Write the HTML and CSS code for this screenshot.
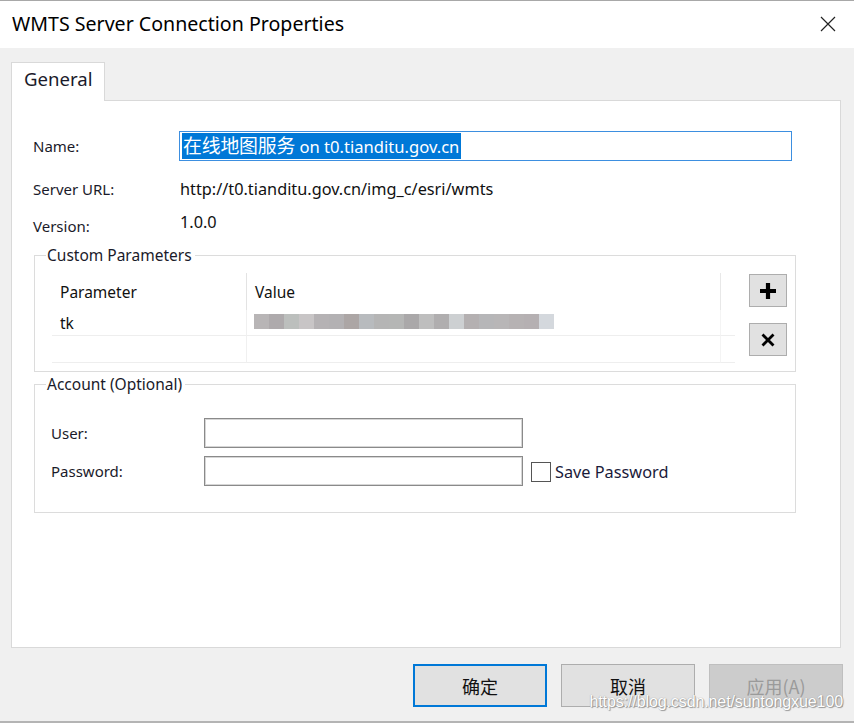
FILE: index.html
```html
<!DOCTYPE html>
<html lang="zh-CN">
<head>
<meta charset="utf-8">
<title>WMTS Server Connection Properties</title>
<link rel="stylesheet" href="styles.css">
</head>
<body>
<div class="window">
  <div class="titlebar">
    <span class="title">WMTS Server Connection Properties</span>
    <svg class="close" width="16" height="16" viewBox="0 0 16 16"><path d="M1 1 L15 15 M15 1 L1 15" stroke="#222" stroke-width="1.2" fill="none"/></svg>
  </div>
  <div class="client">
    <div class="tabs"><div class="tab">General</div></div>
    <div class="panel">
      <div class="row row-name">
        <span class="label">Name:</span>
        <div class="name-input"><span class="sel"><span class="cjk">在线地图服务</span> on t0.tianditu.gov.cn</span></div>
      </div>
      <div class="row row-url">
        <span class="label">Server URL:</span>
        <span class="value">http://t0.tianditu.gov.cn/img_c/esri/wmts</span>
      </div>
      <div class="row row-ver">
        <span class="label label-ver">Version:</span>
        <span class="value">1.0.0</span>
      </div>
      <fieldset class="group group-params">
        <legend>Custom Parameters</legend>
        <div class="params">
          <div class="grid">
            <div class="cell head c1">Parameter</div>
            <div class="cell head c2">Value</div>
            <div class="cell head c3"></div>
            <div class="cell r1 c1">tk</div>
            <div class="cell r1 c2 blur">
              <i style="background:#b8b5b6"></i><i style="background:#aeaaac"></i><i style="background:#bcbfbd"></i><i style="background:#c8c5c6"></i><i style="background:#b5b2b4"></i><i style="background:#b3b1b3"></i><i style="background:#aca6a5"></i><i style="background:#b8bbbe"></i><i style="background:#b5b5b5"></i><i style="background:#b5b6b5"></i><i style="background:#aaa8a9"></i><i style="background:#bebebe"></i><i style="background:#b0aeaf"></i><i style="background:#cdd0d2"></i><i style="background:#b4b0b1"></i><i style="background:#b6b6b8"></i><i style="background:#b8b6b7"></i><i style="background:#b6b2b3"></i><i style="background:#b5b0b2"></i><i style="background:#d4d8dd"></i>
            </div>
            <div class="cell r1 c3"></div>
            <div class="cell r2 c1"></div>
            <div class="cell r2 c2"></div>
            <div class="cell r2 c3"></div>
          </div>
          <div class="side-buttons">
            <div class="sbtn"><svg width="20" height="20" viewBox="0 0 20 20"><path d="M10 2 V18 M2 10 H18" stroke="#000" stroke-width="4.2" fill="none"/></svg></div>
            <div class="sbtn"><svg width="16" height="16" viewBox="0 0 16 16"><path d="M2.5 2.5 L13.5 13.5 M13.5 2.5 L2.5 13.5" stroke="#000" stroke-width="2.8" fill="none"/></svg></div>
          </div>
        </div>
      </fieldset>
      <fieldset class="group group-account">
        <legend>Account (Optional)</legend>
        <div class="acc-row">
          <span class="acc-label">User:</span>
          <div class="textbox"></div>
        </div>
        <div class="acc-row">
          <span class="acc-label">Password:</span>
          <div class="textbox"></div>
          <span class="checkbox"></span>
          <span class="chk-label">Save Password</span>
        </div>
      </fieldset>
    </div>
    <div class="footer">
      <div class="btn btn-default">确定</div>
      <div class="btn">取消</div>
      <div class="btn btn-disabled">应用(A)</div>
    </div>
  </div>
  <div class="watermark">https://blog.csdn.net/suntongxue100</div>
</div>
</body>
</html>
```

FILE: styles.css
```css
html, body {
  margin: 0;
  padding: 0;
}
body {
  width: 854px;
  height: 723px;
  overflow: hidden;
  background: #f0f0f0;
  font-family: "Noto Sans", "Noto Sans CJK SC", sans-serif;
  color: #111;
}
.window {
  position: relative;
  width: 854px;
  height: 723px;
  box-sizing: border-box;
  border-bottom: 2px solid #b4b4b4;
}
.titlebar {
  height: 48px;
  box-sizing: border-box;
  border-top: 1px solid #a8a8a8;
  background: #fff;
  display: flex;
  align-items: center;
  justify-content: space-between;
  padding: 0 18px 0 12px;
}
.title {
  font-size: 19.6px;
  color: #000;
  margin-top: -2px;
  letter-spacing: 0;
}
.close {
  margin-top: -1px;
}
.client {
  padding: 14px 13px 0 11px;
}
.tabs {
  display: flex;
  height: 38px;
}
.tab {
  position: relative;
  z-index: 1;
  width: 94px;
  height: 39px;
  box-sizing: border-box;
  background: #fff;
  border: 1px solid #d9d9d9;
  border-bottom: none;
  font-size: 18.6px;
  padding: 3px 0 0 12px;
  color: #1a1a2a;
}
.panel {
  height: 548px;
  box-sizing: border-box;
  background: #fff;
  border: 1px solid #d9d9d9;
  padding: 30px 44px 0 21px;
  display: flex;
  flex-direction: column;
}
.row {
  display: flex;
  align-items: center;
  height: 28px;
  font-size: 15px;
}
.row-name {
  height: 30px;
}
.row-url {
  margin-top: 14px;
}
.row-ver {
  margin-top: 7px;
}
.label {
  width: 146px;
  flex: none;
  color: #1a1a2a;
}
.label-ver {
  position: relative;
  top: 2px;
}
.row-ver .value {
  position: relative;
  top: -2px;
}
.value {
  font-size: 16.3px;
  color: #111;
  padding-left: 1px;
}
.name-input {
  width: 613px;
  height: 30px;
  box-sizing: border-box;
  border: 1.5px solid #3d8fe0;
  display: flex;
  align-items: center;
  padding-left: 2px;
}
.sel {
  background: #0078d7;
  color: #fff;
  font-size: 16.6px;
  line-height: 24px;
  padding: 0 2px 0 1px;
  white-space: nowrap;
}
.cjk {
  font-family: "Noto Sans CJK SC", sans-serif;
  font-size: 18.9px;
  letter-spacing: -0.2px;
}
.group {
  margin: 0 0 0 1px;
  border: 1px solid #dcdcdc;
  padding: 8px 8px 8px 17px;
  width: 762px;
  box-sizing: border-box;
}
.group legend {
  font-size: 15.5px;
  line-height: 20px;
  padding: 0 3px 0 1px;
  margin-left: -6px;
  color: #1a1a2a;
}
.group-params {
  margin-top: 7px;
}
.params {
  display: flex;
  gap: 14px;
}
.grid {
  display: grid;
  grid-template-columns: 195px 474px 14px;
  grid-template-rows: 37px 26px 27px;
  width: 683px;
}
.cell {
  display: flex;
  align-items: center;
  font-size: 15.5px;
  box-sizing: border-box;
}
.head.c1 {
  padding-left: 8px;
  border-right: 1px solid #e3e3e3;
}
.head.c2 {
  padding-left: 8px;
  border-right: 1px solid #e8e8e8;
}
.r1, .r2 {
  border-bottom: 1px solid #eeeeee;
}
.r1.c1, .r2.c1 {
  border-right: 1px solid #f0f0f0;
}
.r1.c2, .r2.c2 {
  border-right: 1px solid #f4f4f4;
}
.r1.c1 {
  padding-left: 8px;
}
.blur {
  padding-left: 7px;
}
.blur i {
  display: block;
  width: 15px;
  height: 15px;
  flex: none;
  margin-top: -2px;
}
.side-buttons {
  display: flex;
  flex-direction: column;
  gap: 16px;
  margin-top: 1px;
}
.sbtn {
  width: 38px;
  height: 33px;
  box-sizing: border-box;
  background: #e1e1e1;
  border: 1px solid #adadad;
  display: flex;
  align-items: center;
  justify-content: center;
}
.group-account {
  margin-top: 2px;
  padding: 24px 8px 26px 16px;
  display: flex;
  flex-direction: column;
  gap: 8px;
}
.group-account legend {
  margin-left: -5px;
}
.acc-row {
  display: flex;
  align-items: center;
  height: 30px;
  font-size: 15px;
}
.acc-label {
  width: 153px;
  flex: none;
  color: #1a1a2a;
}
.textbox {
  width: 319px;
  height: 30px;
  box-sizing: border-box;
  border: 1px solid #8a8a8a;
  box-shadow: inset 0 0 0 1px #d6d6d6;
  background: #fff;
}
.checkbox {
  width: 20px;
  height: 20px;
  box-sizing: border-box;
  border: 1.5px solid #555;
  margin-left: 8px;
  margin-top: 1px;
}
.chk-label {
  margin-left: 4px;
  margin-top: 1px;
  font-size: 16.3px;
  color: #1a1a3a;
}
.footer {
  display: flex;
  justify-content: flex-end;
  gap: 14px;
  margin-top: 16px;
  margin-right: -2px;
}
.btn {
  width: 134px;
  height: 43px;
  box-sizing: border-box;
  background: #e1e1e1;
  border: 1px solid #adadad;
  display: flex;
  align-items: center;
  justify-content: center;
  font-family: "Noto Sans CJK SC", sans-serif;
  font-size: 18px;
  color: #111;
}
.btn-default {
  border: 2px solid #0078d7;
}
.btn-disabled {
  background: #cccccc;
  border-color: #bfbfbf;
  color: #9a9a9a;
}
.watermark {
  position: absolute;
  right: 11px;
  top: 693px;
  font-family: "Liberation Sans", Arial, sans-serif;
  font-size: 16px;
  color: #fff;
  text-shadow: 0 0 1px #888, 1px 1px 1px #999;
  letter-spacing: -0.1px;
}
```
